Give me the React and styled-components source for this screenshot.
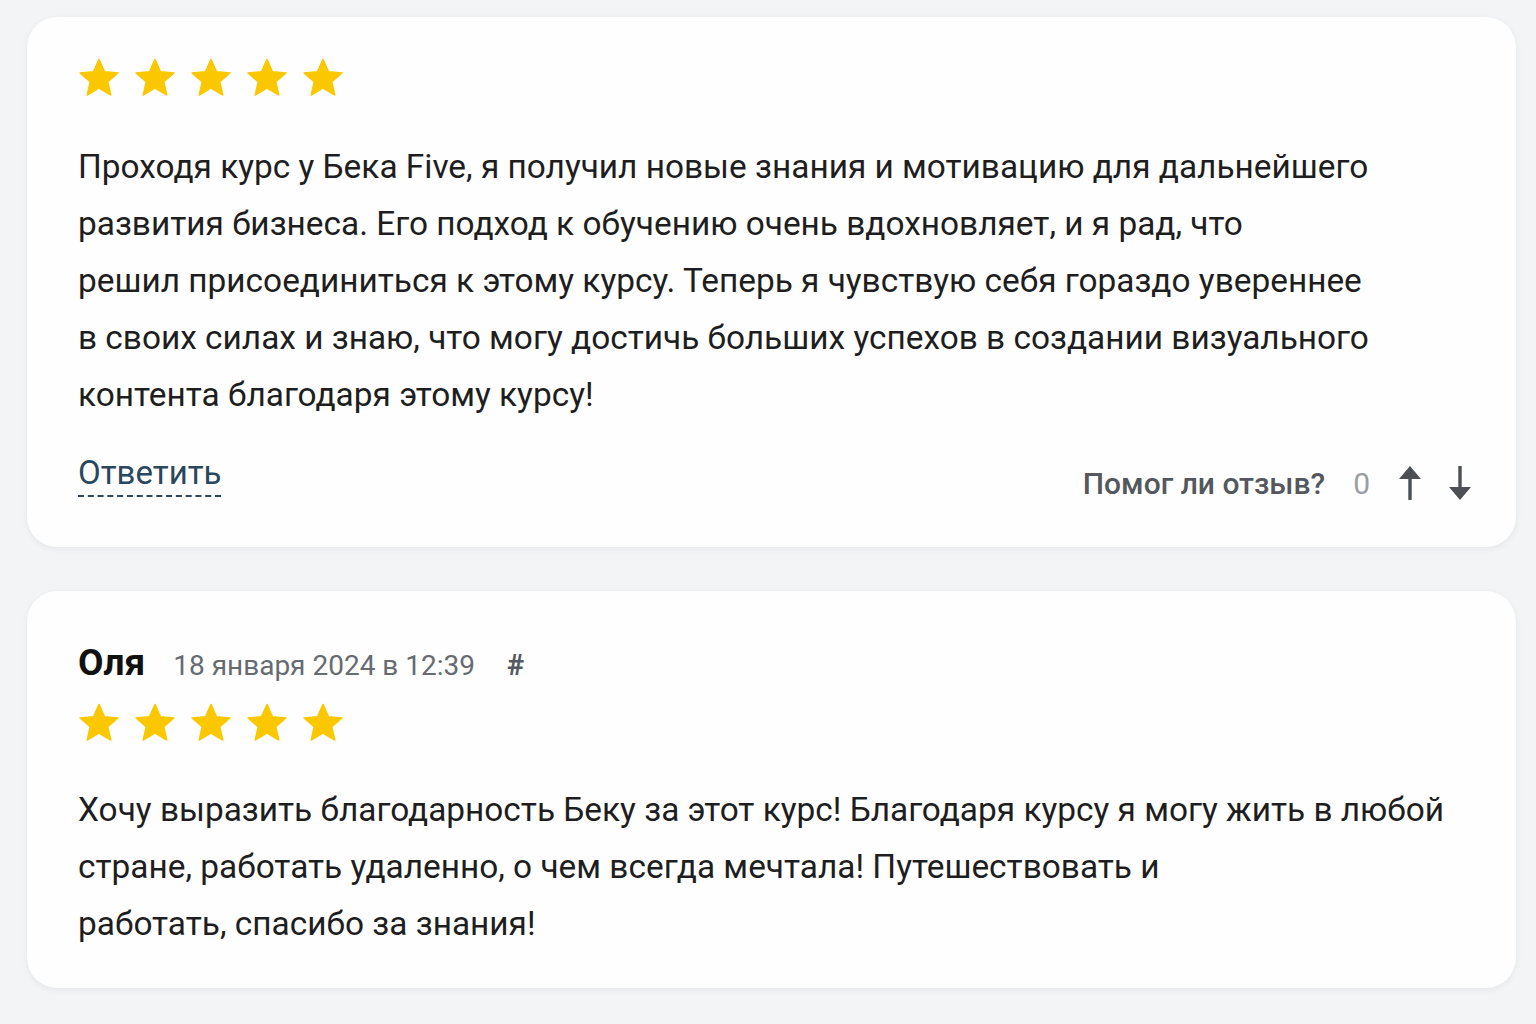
import React from "react";
import styled, { createGlobalStyle } from "styled-components";

const Global = createGlobalStyle`
  html, body { margin: 0; padding: 0; background: #f3f4f6; }
  body { font-family: Roboto, "Noto Sans", sans-serif; -webkit-font-smoothing: antialiased; }
`;

const Page = styled.div`
  display: flex;
  flex-direction: column;
  gap: 44px;
  padding: 17px 20px 30px 27px;
`;

const Card = styled.section`
  background: #fefefe;
  border-radius: 30px;
  box-shadow: 0 2px 6px rgba(20, 30, 50, 0.06), 0 0 1px rgba(20, 30, 50, 0.05);
  padding: ${(p) => p.$pad};
  display: flex;
  flex-direction: column;
`;

const Header = styled.div`
  display: flex;
  align-items: baseline;
  gap: 28px;
  margin-bottom: 19px;
`;

const Name = styled.span`
  font-size: 37px;
  font-weight: 700;
  color: #111;
`;

const DateText = styled.span`
  font-size: 28px;
  color: #666b70;
`;

const Anchor = styled.span`
  font-size: 29px;
  font-weight: 700;
  color: #555a60;
  margin-left: 4px;
`;

const Stars = styled.div`
  display: flex;
  gap: 14px;
  margin-bottom: ${(p) => p.$mb}px;
`;

const Text = styled.p`
  margin: 0;
  font-size: 33.4px;
  line-height: 57px;
  color: #1e1e1e;
`;

const Line = styled.span`
  display: block;
`;

const Footer = styled.div`
  display: flex;
  justify-content: space-between;
  align-items: flex-end;
  margin-top: 30px;
`;

const Reply = styled.a`
  font-size: 33px;
  color: #2b475c;
  text-decoration: none;
  border-bottom: 2px dashed #2b475c;
  line-height: 40px;
  padding-bottom: 2px;
`;

const Votes = styled.div`
  display: flex;
  align-items: center;
  margin-bottom: -4px;
`;

const Question = styled.span`
  font-size: 30px;
  font-weight: 500;
  color: #54585c;
`;

const Count = styled.span`
  font-size: 30px;
  color: #9a9ea2;
  margin-left: 28px;
`;

const VoteBtn = styled.button`
  border: 0;
  background: none;
  padding: 0;
  margin-left: ${(p) => p.$ml}px;
  display: flex;
  cursor: pointer;
`;

const Star = () => (
  <svg width="42" height="40" viewBox="0 0 24 23">
    <path
      d="M12 0.8l3.2 7.1 7.7.7-5.8 5.1 1.7 7.6L12 17.3l-6.8 4 1.7-7.6L1.1 8.6l7.7-.7z"
      fill="#fbc800"
      stroke="#fbc800"
      strokeWidth="0.8"
      strokeLinejoin="round"
    />
  </svg>
);

const StarRow = ({ mb }) => (
  <Stars $mb={mb}>
    {[0, 1, 2, 3, 4].map((i) => (
      <Star key={i} />
    ))}
  </Stars>
);

const Arrow = ({ down }) => (
  <svg width="24" height="36" viewBox="0 0 24 36" style={down ? { transform: "rotate(180deg)" } : undefined}>
    <path d="M12 1 L23 14 L1 14 Z" fill="#4c5054" />
    <rect x="10.3" y="12" width="3.4" height="23" fill="#4c5054" />
  </svg>
);

export default function App() {
  return (
    <>
      <Global />
      <Page>
        <Card $pad="41px 44px 50px 51px">
          <StarRow mb={40} />
          <Text>
            <Line>Проходя курс у Бека Five, я получил новые знания и мотивацию для дальнейшего</Line>
            <Line>развития бизнеса. Его подход к обучению очень вдохновляет, и я рад, что</Line>
            <Line>решил присоединиться к этому курсу. Теперь я чувствую себя гораздо увереннее</Line>
            <Line>в своих силах и знаю, что могу достичь больших успехов в создании визуального</Line>
            <Line>контента благодаря этому курсу!</Line>
          </Text>
          <Footer>
            <Reply href="#">Ответить</Reply>
            <Votes>
              <Question>Помог ли отзыв?</Question>
              <Count>0</Count>
              <VoteBtn $ml={28}>
                <Arrow />
              </VoteBtn>
              <VoteBtn $ml={26}>
                <Arrow down />
              </VoteBtn>
            </Votes>
          </Footer>
        </Card>
        <Card $pad="50px 44px 36px 51px">
          <Header>
            <Name>Оля</Name>
            <DateText>18 января 2024 в 12:39</DateText>
            <Anchor>#</Anchor>
          </Header>
          <StarRow mb={38} />
          <Text>
            <Line>Хочу выразить благодарность Беку за этот курс! Благодаря курсу я могу жить в любой</Line>
            <Line>стране, работать удаленно, о чем всегда мечтала! Путешествовать и</Line>
            <Line>работать, спасибо за знания!</Line>
          </Text>
        </Card>
      </Page>
    </>
  );
}
